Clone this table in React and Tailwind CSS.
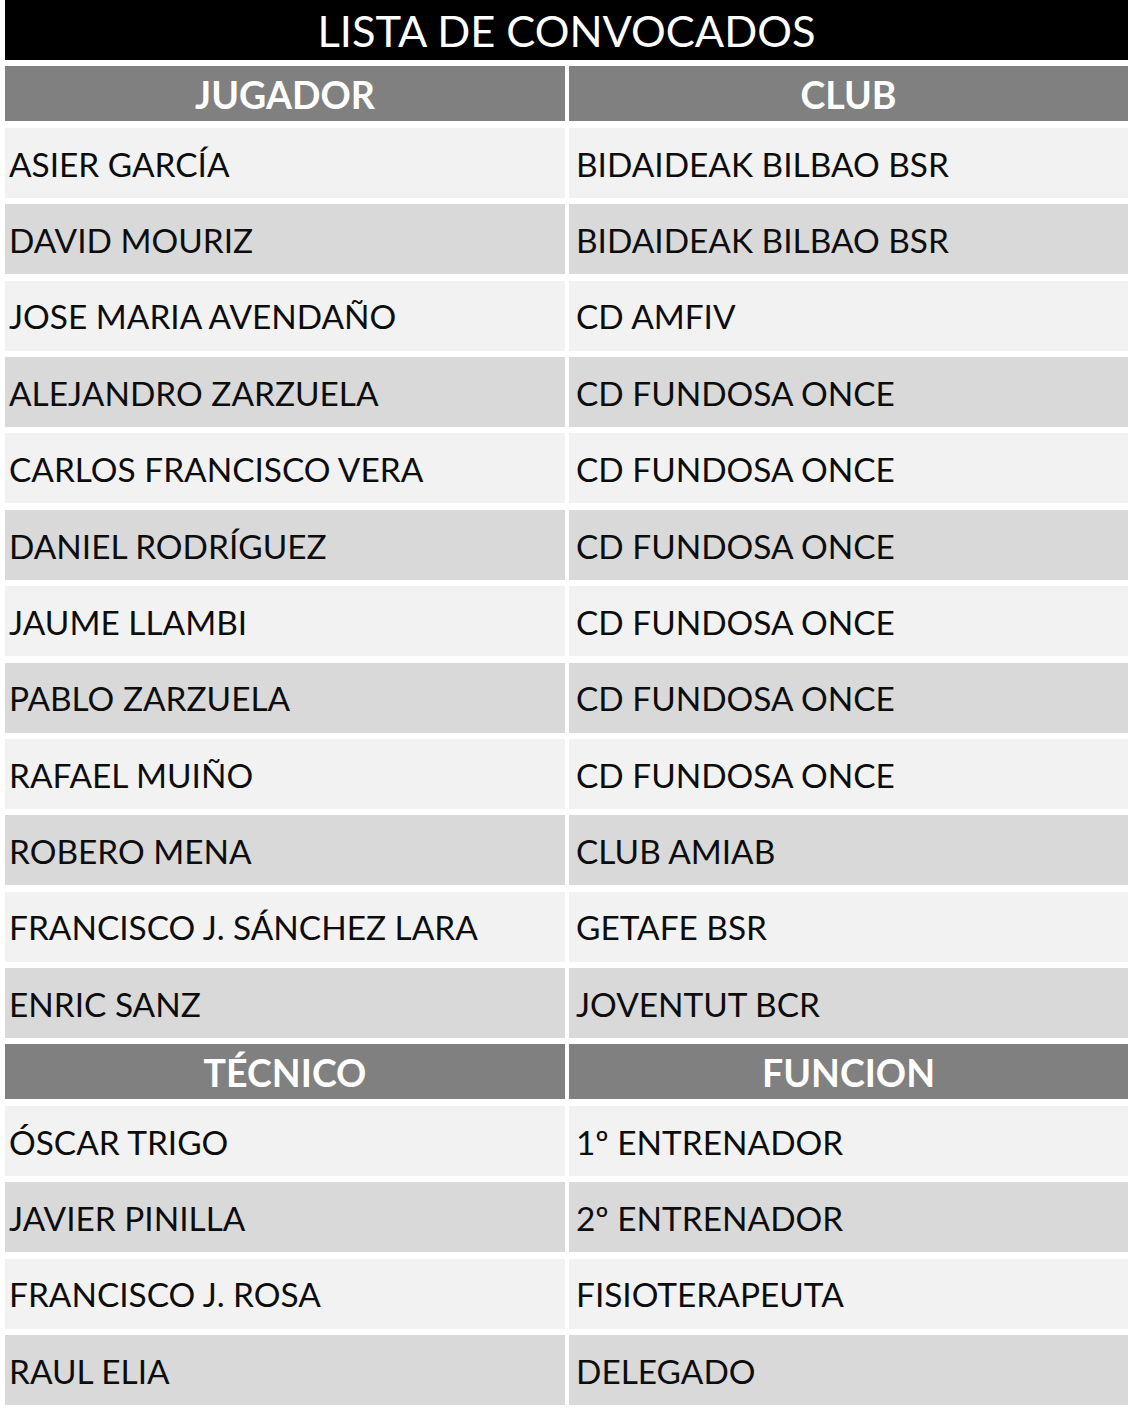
import React from "react";

const players = [
  ["ASIER GARCÍA", "BIDAIDEAK BILBAO BSR"],
  ["DAVID MOURIZ", "BIDAIDEAK BILBAO BSR"],
  ["JOSE MARIA AVENDAÑO", "CD AMFIV"],
  ["ALEJANDRO ZARZUELA", "CD FUNDOSA ONCE"],
  ["CARLOS FRANCISCO VERA", "CD FUNDOSA ONCE"],
  ["DANIEL RODRÍGUEZ", "CD FUNDOSA ONCE"],
  ["JAUME LLAMBI", "CD FUNDOSA ONCE"],
  ["PABLO ZARZUELA", "CD FUNDOSA ONCE"],
  ["RAFAEL MUIÑO", "CD FUNDOSA ONCE"],
  ["ROBERO MENA", "CLUB AMIAB"],
  ["FRANCISCO J. SÁNCHEZ LARA", "GETAFE BSR"],
  ["ENRIC SANZ", "JOVENTUT BCR"],
];

const staff = [
  ["ÓSCAR TRIGO", "1º ENTRENADOR"],
  ["JAVIER PINILLA", "2º ENTRENADOR"],
  ["FRANCISCO J. ROSA", "FISIOTERAPEUTA"],
  ["RAUL ELIA", "DELEGADO"],
];

function HeaderRow({ left, right }) {
  return (
    <div className="grid grid-cols-[560px_559px] gap-x-[4px]">
      <div className="h-[55px] bg-[#808080] flex items-center justify-center text-white font-bold text-[37.5px] leading-none pt-[2px]">
        {left}
      </div>
      <div className="h-[55px] bg-[#808080] flex items-center justify-center text-white font-bold text-[37.5px] leading-none pt-[2px]">
        {right}
      </div>
    </div>
  );
}

function DataRow({ left, right, index }) {
  const bg = index % 2 === 0 ? "bg-[#f2f2f2]" : "bg-[#d9d9d9]";
  return (
    <div className="grid grid-cols-[560px_559px] gap-x-[4px]">
      <div className={`h-[70px] ${bg} flex items-center pl-[4px] pt-[3px] text-[#0d0d0d] text-[33.4px] leading-none`}>
        {left}
      </div>
      <div className={`h-[70px] ${bg} flex items-center pl-[7px] pt-[3px] text-[#0d0d0d] text-[33.4px] leading-none`}>
        {right}
      </div>
    </div>
  );
}

export default function App() {
  return (
    <div className="bg-white w-[1147px] h-[1413px] pl-[5px] font-['Lato',sans-serif]">
      <div className="w-[1123px] flex flex-col gap-y-[6.4px]">
        <div className="h-[60px] bg-black flex items-center justify-center text-white text-[43.4px] leading-none pt-[1px]">
          LISTA DE CONVOCADOS
        </div>
        <HeaderRow left="JUGADOR" right="CLUB" />
        {players.map((p, i) => (
          <DataRow key={p[0]} left={p[0]} right={p[1]} index={i} />
        ))}
        <HeaderRow left="TÉCNICO" right="FUNCION" />
        {staff.map((p, i) => (
          <DataRow key={p[0]} left={p[0]} right={p[1]} index={i} />
        ))}
      </div>
    </div>
  );
}
